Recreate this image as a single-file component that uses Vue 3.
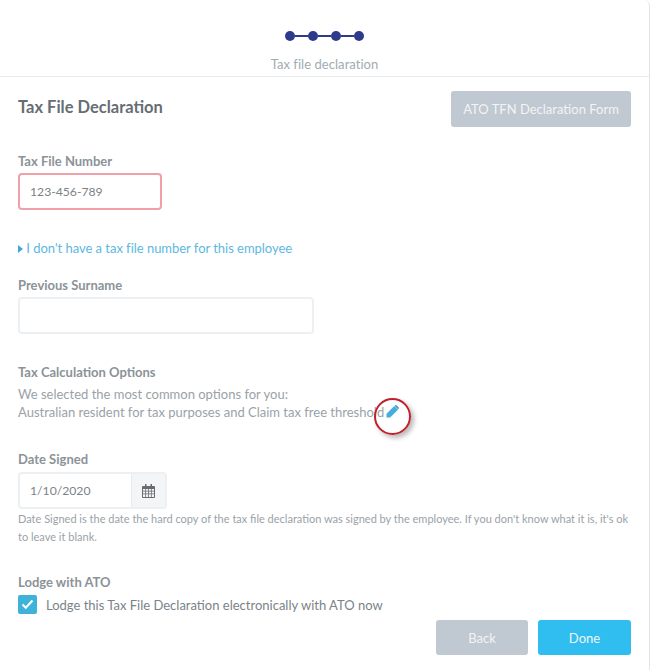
<script setup>
import { ref } from "vue";

const tfn = ref("123-456-789");
const dateSigned = ref("1/10/2020");
const lodge = ref(true);
</script>

<template>
  <div class="panel">
    <header class="wizard-head">
      <div class="steps">
        <span class="dot"></span>
        <span class="line"></span>
        <span class="dot"></span>
        <span class="line"></span>
        <span class="dot"></span>
        <span class="line"></span>
        <span class="dot"></span>
      </div>
      <div class="step-name">Tax file declaration</div>
    </header>

    <div class="body">
      <div class="title-row">
        <h2>Tax File Declaration</h2>
        <button class="btn btn-grey form-btn">ATO TFN Declaration Form</button>
      </div>

      <label class="label tfn-label">Tax File Number</label>
      <input class="input tfn-input" v-model="tfn" />

      <a class="link">
        <svg width="5" height="8" viewBox="0 0 5 8"><path d="M0 0l5 4-5 4z" fill="#3fa9d6" /></svg>
        I don't have a tax file number for this employee
      </a>

      <label class="label surname-label">Previous Surname</label>
      <input class="input surname-input" />

      <label class="label calc-label">Tax Calculation Options</label>
      <p class="calc-text">
        We selected the most common options for you:<br />
        Australian resident for tax purposes and Claim tax free threshold
        <span class="edit">
          <svg width="13" height="13" viewBox="0 0 13 13">
            <path d="M0.500 8.800L8.300 1l3.700 3.700-7.800 7.800H0.500z" fill="#45aede" />
            <path d="M9.200 0.400a1 1 0 0 1 1.400 0l2 2a1 1 0 0 1 0 1.400l-.5.400-3.400-3.400z" fill="#2f8fc4" />
          </svg>
          <span class="ring"></span>
        </span>
      </p>

      <label class="label date-label">Date Signed</label>
      <div class="date-group">
        <input class="date-input" v-model="dateSigned" />
        <span class="date-addon">
          <svg width="13" height="14" viewBox="0 0 13 14">
            <path
              fill="#666c70"
              fill-rule="evenodd"
              d="M3 0h1.500v2H8.500V0H10v2h2a1 1 0 0 1 1 1v10a1 1 0 0 1-1 1H1a1 1 0 0 1-1-1V3a1 1 0 0 1 1-1h2zM1 5v1.800h2.300V5zm3.100 0v1.800h2V5zm2.800 0v1.800h2V5zm2.800 0v1.800H12V5zM1 7.600v1.900h2.300V7.600zm3.100 0v1.900h2V7.600zm2.800 0v1.900h2V7.600zm2.800 0v1.900H12V7.600zM1 10.300V13h2.300v-2.700zm3.100 0V13h2v-2.700zm2.800 0V13h2v-2.700zm2.800 0V13H12v-2.700z"
            />
          </svg>
        </span>
      </div>
      <p class="help">
        Date Signed is the date the hard copy of the tax file declaration was signed by the employee. If you don't know what it is, it's ok to leave it blank.
      </p>

      <label class="label lodge-label">Lodge with ATO</label>
      <div class="check-row">
        <span class="check" :class="{ on: lodge }" @click="lodge = !lodge">
          <svg v-if="lodge" width="13" height="11" viewBox="0 0 13 11">
            <path d="M1.500 5.500l3.300 3.300L11.500 1.500" fill="none" stroke="#fff" stroke-width="2" />
          </svg>
        </span>
        <span>Lodge this Tax File Declaration electronically with ATO now</span>
      </div>

      <div class="actions">
        <button class="btn btn-grey back-btn">Back</button>
        <button class="btn btn-blue done-btn">Done</button>
      </div>
    </div>
  </div>
</template>

<style>
html,
body {
  margin: 0;
  background: #fff;
}
</style>

<style scoped>
.panel {
  width: 650px;
  height: 670px;
  box-sizing: border-box;
  border-right: 1px solid #e4e4e4;
  border-top-right-radius: 6px;
  font-family: Lato, "Open Sans", sans-serif;
  font-size: 13px;
  color: #7b8389;
  overflow: hidden;
}

.wizard-head {
  height: 77px;
  box-sizing: border-box;
  border-bottom: 1px solid #e6ebee;
  padding-top: 31px;
  display: flex;
  flex-direction: column;
  align-items: center;
}

.steps {
  display: flex;
  align-items: center;
  height: 10px;
}

.dot {
  width: 10px;
  height: 10px;
  border-radius: 50%;
  background: #2e3a8c;
}

.line {
  width: 13px;
  height: 2px;
  background: #2e3a8c;
}

.step-name {
  margin-top: 15px;
  font-size: 13px;
  line-height: 16px;
  letter-spacing: 0.05px;
  color: #a2abb0;
}

.body {
  padding: 14px 18px 0 18px;
}

.title-row {
  display: flex;
  justify-content: space-between;
  align-items: center;
  height: 36px;
}

h2 {
  margin: 0 0 4px;
  font-size: 16.5px;
  font-weight: 700;
  color: #666d73;
}

.btn {
  border: none;
  border-radius: 3px;
  color: #f2f4f6;
  font-family: inherit;
  font-size: 13px;
  font-weight: 400;
  padding: 0;
}

.btn-grey {
  background: #c0c8d1;
}

.btn-blue {
  background: #30bef0;
}

.form-btn {
  width: 180px;
  height: 36px;
}

.label {
  display: block;
  font-weight: 700;
  font-size: 13px;
  line-height: 16px;
  color: #8b9398;
}

.tfn-label {
  margin-top: 26px;
}

.input {
  display: block;
  box-sizing: border-box;
  height: 37px;
  border: 2px solid #edf0f2;
  border-radius: 4px;
  padding: 0 10px;
  font-family: inherit;
  font-size: 12.2px;
  color: #7b8389;
  outline: none;
}

.tfn-input {
  width: 144px;
  margin-top: 4px;
  border-color: #f0a0a8;
}

.link {
  display: block;
  margin-top: 30px;
  line-height: 16px;
  letter-spacing: -0.03px;
  color: #5db8df;
}

.surname-label {
  margin-top: 21px;
}

.surname-input {
  width: 296px;
  margin-top: 4px;
}

.calc-label {
  margin-top: 30px;
}

.calc-text {
  margin: 5px 0 0;
  line-height: 18px;
  color: #9aa2a8;
}

.edit {
  position: relative;
  display: inline-block;
  width: 13px;
  height: 13px;
  margin-left: -2px;
  vertical-align: -1px;
}

.edit svg {
  display: block;
}

.ring {
  position: absolute;
  left: -12px;
  top: -7px;
  width: 33px;
  height: 33px;
  border: 2px solid #c0202a;
  border-radius: 50%;
  box-shadow: 3px 3px 5px rgba(0, 0, 0, 0.28);
}

.date-label {
  margin-top: 30px;
}

.date-group {
  display: flex;
  width: 149px;
  height: 37px;
  margin-top: 5px;
  box-sizing: border-box;
  border: 2px solid #edf0f2;
  border-radius: 4px;
}

.date-input {
  width: 111px;
  box-sizing: border-box;
  border: none;
  padding: 0 10px;
  font-family: inherit;
  font-size: 12.2px;
  color: #7b8389;
  outline: none;
  background: transparent;
}

.date-addon {
  flex: 1;
  display: flex;
  align-items: center;
  justify-content: center;
  background: #f3f5f6;
  border-left: 1px solid #e6ebee;
}

.help {
  margin: 1px 0 0;
  font-size: 11px;
  line-height: 18px;
  color: #9aa2a8;
}

.lodge-label {
  margin-top: 28px;
}

.check-row {
  display: flex;
  align-items: center;
  gap: 9px;
  margin-top: 5px;
}

.check {
  width: 19px;
  height: 19px;
  border-radius: 2px;
  background: #3fb2da;
  display: flex;
  align-items: center;
  justify-content: center;
}

.actions {
  display: flex;
  justify-content: flex-end;
  gap: 10px;
  margin-top: 6px;
}

.back-btn {
  width: 92px;
  height: 35px;
}

.done-btn {
  width: 93px;
  height: 35px;
}
</style>
